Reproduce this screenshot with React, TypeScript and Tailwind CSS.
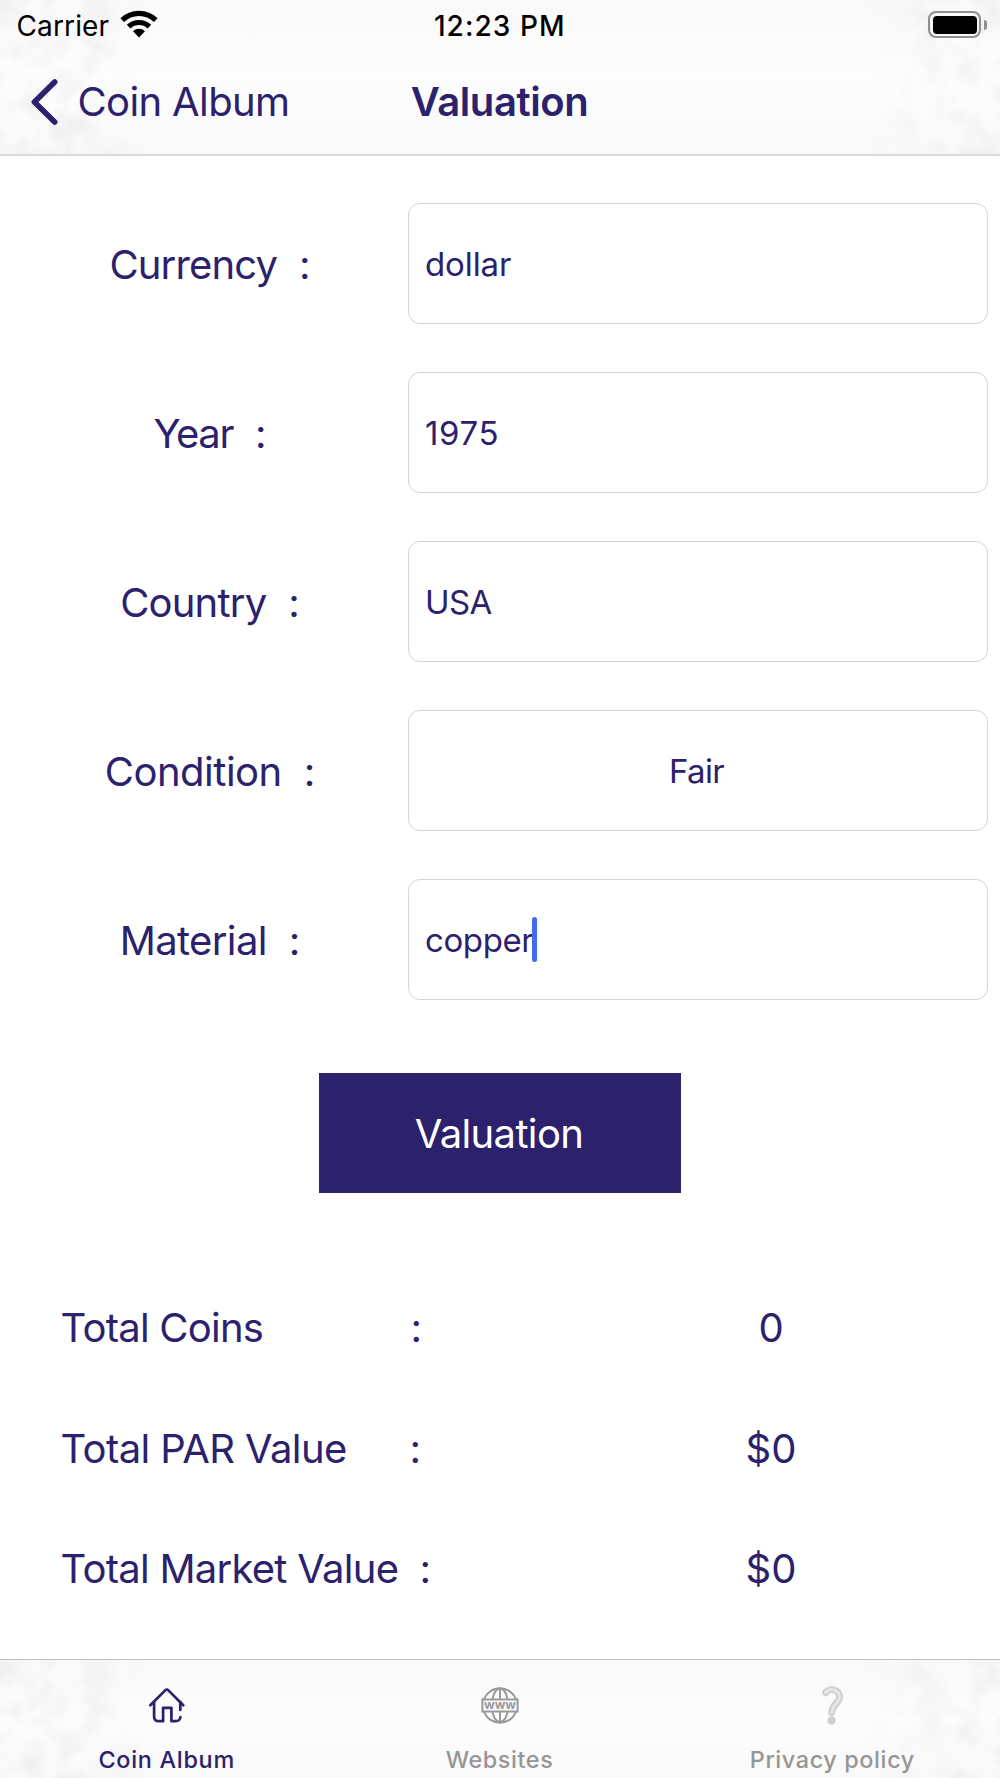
import React from "react";

const INK = "#2b216c";

const fields = [
  { label: "Currency", value: "dollar", labelTracking: "tracking-[-0.85px]", valueTracking: "tracking-[-0.1px]" },
  { label: "Year", value: "1975", labelTracking: "tracking-[-1.4px]", valueTracking: "tracking-[0.6px]" },
  { label: "Country", value: "USA", labelTracking: "tracking-[-0.79px]", valueTracking: "tracking-[-0.6px]" },
  { label: "Condition", value: "Fair", labelTracking: "tracking-[-0.5px]", valueTracking: "tracking-[-0.6px]", centered: true },
  { label: "Material", value: "copper", labelTracking: "tracking-[-0.63px]", valueTracking: "tracking-[-0.4px]", caret: true },
];

const totals = [
  { label: "Total Coins", value: "0", tracking: "tracking-[-0.76px]", width: "w-[350px]" },
  { label: "Total PAR Value", value: "$0", tracking: "tracking-[-0.6px]", width: "w-[349px]" },
  { label: "Total Market Value", value: "$0", tracking: "tracking-[-0.74px]", width: "w-[359px]" },
];

function Wifi() {
  return (
    <svg width="40" height="30" viewBox="0 0 40 30" fill="none" stroke="#000" strokeWidth="5.2">
      <path d="M3.2 11.1A24.2 24.2 0 0 1 36.8 11.1" />
      <path d="M9.6 17.7A15 15 0 0 1 30.4 17.7" />
      <path d="M20 28.5L14 22.3A8.6 8.6 0 0 1 26 22.3Z" fill="#000" stroke="none" />
    </svg>
  );
}

function Battery() {
  return (
    <div className="flex items-center gap-[3px]">
      <div className="h-[27px] w-[53px] rounded-[8px] border-2 border-[#8f8f8f] p-[2.5px]">
        <div className="h-full w-full rounded-[4px] bg-black" />
      </div>
      <div className="h-[10px] w-[3px] rounded-r-full bg-[#8f8f8f]" />
    </div>
  );
}

function Paper() {
  return (
    <svg className="pointer-events-none absolute inset-0 h-full w-full [mask-image:linear-gradient(to_right,black_8%,transparent_15%,transparent_86%,black_96%)]">
      <defs>
        <filter id="paper" x="0" y="0" width="100%" height="100%">
          <feTurbulence type="fractalNoise" baseFrequency="0.035" numOctaves="3" seed="4" />
          <feColorMatrix values="0 0 0 0 0  0 0 0 0 0  0 0 0 0 0  0.09 0 0 0 -0.033" />
        </filter>
      </defs>
      <rect width="100%" height="100%" filter="url(#paper)" />
    </svg>
  );
}

function HomeIcon() {
  return (
    <svg width="40" height="40" viewBox="0 0 40 40" fill="none" stroke={INK} strokeWidth="2.7" strokeLinecap="round" strokeLinejoin="round">
      <path d="M3.3 20.3L18.2 5.4Q19.8 3.8 21.4 5.4L36.3 20.3" />
      <path d="M7.1 17V31.5Q7.1 36.2 11.8 36.2H16.1V22.8H24.4V36.2H28.3Q33.1 36.2 33.4 32" />
      <path d="M33.3 17V25" />
    </svg>
  );
}

function GlobeIcon() {
  return (
    <svg width="40" height="40" viewBox="0 0 40 40" fill="none" stroke="#999" strokeWidth="2">
      <path d="M3.9 14.4A17.2 17.2 0 0 1 36.1 14.4M3.9 26.6A17.2 17.2 0 0 0 36.1 26.6" />
      <path d="M12.5 14.4C13.5 8.5 16 4 20 3.3C24 4 26.5 8.5 27.5 14.4M12.5 26.6C13.5 32.5 16 36.5 20 37.2C24 36.5 26.5 32.5 27.5 26.6M20 3.3V14.4M20 26.6V37.2" />
      <path d="M2.4 14.4H37.6V26.6H2.4Z" />
      <text x="4" y="24" textLength="32" lengthAdjust="spacingAndGlyphs" fill="#999" stroke="none" fontFamily="Inter, sans-serif" fontSize="12.5" fontWeight="700">
        www
      </text>
    </svg>
  );
}

function QuestionIcon() {
  return (
    <svg width="40" height="40" viewBox="0 0 40 40" fill="none" strokeLinecap="round" strokeLinejoin="round">
      <path d="M12.6 7.5C14.8 4.7 18.6 4 22 5.3C26.5 7 27.8 12 25.2 16C22.8 19.5 19.2 21.5 18.7 27.5" stroke="#cfcfcf" strokeWidth="7" />
      <path d="M12.6 7.5C14.8 4.7 18.6 4 22 5.3C26.5 7 27.8 12 25.2 16C22.8 19.5 19.2 21.5 18.7 27.5" stroke="#e6e6e6" strokeWidth="3" />
      <circle cx="18.5" cy="35.4" r="3.3" fill="#d2d2d2" stroke="#cacaca" strokeWidth="1.4" />
    </svg>
  );
}

const tabs = [
  { label: "Coin Album", icon: <HomeIcon />, style: "text-[#2b216c] tracking-[0.72px]" },
  { label: "Websites", icon: <GlobeIcon />, style: "text-[#969696] tracking-[0.58px] pr-[1px]" },
  { label: "Privacy policy", icon: <QuestionIcon />, style: "text-[#969696] tracking-[0.62px] pr-[2px]" },
];

export default function App() {
  return (
    <div className="flex h-[1778px] w-[1000px] flex-col overflow-hidden bg-white font-['Inter',sans-serif] text-[40px] leading-none text-[#2b216c]">
      <header className="relative h-[156px] shrink-0 border-b-2 border-[#dadada] bg-linear-to-b from-[#f9f9f9] via-[#fdfdfd] to-[#f9f9f9]">
        <Paper />
        <div className="relative grid h-[50px] grid-cols-[1fr_auto_1fr] items-center pl-[16.5px] pr-[13px] text-[28px] text-black">
          <div className="flex items-center gap-[9.5px]">
            <span className="pt-[1px] tracking-[0.13px]">Carrier</span>
            <span className="pb-[3px]"><Wifi /></span>
          </div>
          <div className="pr-[4px] pt-[1px] font-medium tracking-[1.06px]">12:23 PM</div>
          <div className="flex justify-end pb-[1px]">
            <Battery />
          </div>
        </div>
        <div className="relative grid h-[103px] grid-cols-[1fr_auto_1fr] items-center pl-[28px] pr-[28px]">
          <div className="flex items-center">
            <svg width="32" height="48" viewBox="0 0 32 48" fill="none" stroke={INK} strokeWidth="5.6" strokeLinecap="round" strokeLinejoin="round">
              <path d="M26.7 4L6.4 24L26.7 44" />
            </svg>
            <span className="ml-[17.5px] tracking-[-0.63px]">Coin Album</span>
          </div>
          <h1 className="pr-[1px] font-semibold tracking-[-0.4px]">Valuation</h1>
        </div>
      </header>

      <main className="flex-1">
        <form className="flex flex-col gap-12 pt-[47px] pl-3 pr-3" onSubmit={(e) => e.preventDefault()}>
          {fields.map((f) => (
            <div key={f.label} className="flex h-[121px]">
              <label className="flex w-[396px] items-center justify-center gap-[22px] pt-[3px]">
                <span className={f.labelTracking}>{f.label}</span>
                <span>:</span>
              </label>
              <div className={`flex w-[580px] items-center rounded-[12px] border border-[#d4d4d4] text-[33px] ${f.centered ? "justify-center pr-[3px]" : "pl-[16px]"}`}>
                <span className={`pt-[1px] ${f.valueTracking}`}>{f.value}</span>
                {f.caret && <span className="-ml-[1px] h-[45px] w-[5px] rounded-full bg-[#426bf2]" />}
              </div>
            </div>
          ))}
        </form>

        <button className="mx-auto mt-[73px] flex h-[120px] w-[362px] items-center justify-center bg-[#2b216c] pr-[2px] pt-[2px] tracking-[-0.64px] text-white">
          Valuation
        </button>

        <dl className="mt-[75px] flex flex-col pl-[60.5px]">
          {totals.map((t) => (
            <div key={t.label} className="flex h-[120.6px] items-center">
              <dt className="flex w-[490.5px] whitespace-nowrap">
                <span className={`${t.width} ${t.tracking}`}>{t.label}</span>
                <span>:</span>
              </dt>
              <dd className="w-[440px] text-center">{t.value}</dd>
            </div>
          ))}
        </dl>
      </main>

      <nav className="relative grid h-[119px] shrink-0 grid-cols-3 border-t border-[#c2c2c2] bg-linear-to-b from-[#f9f9f9] via-[#fcfcfc] to-[#f9f9f9]">
        <Paper />
        {tabs.map((t) => (
          <div key={t.label} className="relative flex flex-col items-center pt-[25px]">
            {t.icon}
            <span className={`mt-[23px] text-[23.4px] font-medium ${t.style}`}>{t.label}</span>
          </div>
        ))}
      </nav>
    </div>
  );
}
